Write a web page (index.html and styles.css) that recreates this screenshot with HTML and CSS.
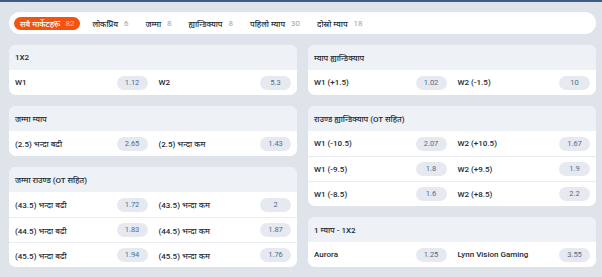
FILE: index.html
```html
<!DOCTYPE html>
<html lang="ne">
<head>
  <meta charset="UTF-8">
  <title>बजारहरू</title>
  <link rel="stylesheet" href="styles.css">
</head>
<body>

<div class="tabs">
  <span class="tab active">सबै मार्केटहरू <span class="count">82</span></span>
  <span class="tab">लोकप्रिय <span class="count">6</span></span>
  <span class="tab">जम्मा <span class="count">8</span></span>
  <span class="tab">ह्यान्डिक्याप <span class="count">8</span></span>
  <span class="tab">पहिलो म्याप <span class="count">30</span></span>
  <span class="tab">दोस्रो म्याप <span class="count">18</span></span>
</div>

<div class="markets">
  <div class="column">
    <div class="market">
      <div class="market-head">1X2</div>
      <div class="row">
        <div class="bet"><span class="name">W1</span><span class="odd">1.12</span></div>
        <div class="bet"><span class="name">W2</span><span class="odd">5.3</span></div>
      </div>
    </div>
    <div class="market">
      <div class="market-head">जम्मा म्याप</div>
      <div class="row">
        <div class="bet"><span class="name">(2.5) भन्दा बढी</span><span class="odd">2.65</span></div>
        <div class="bet"><span class="name">(2.5) भन्दा कम</span><span class="odd">1.43</span></div>
      </div>
    </div>
    <div class="market">
      <div class="market-head">जम्मा राउण्ड (OT सहित)</div>
      <div class="row">
        <div class="bet"><span class="name">(43.5) भन्दा बढी</span><span class="odd">1.72</span></div>
        <div class="bet"><span class="name">(43.5) भन्दा कम</span><span class="odd">2</span></div>
      </div>
      <div class="row">
        <div class="bet"><span class="name">(44.5) भन्दा बढी</span><span class="odd">1.83</span></div>
        <div class="bet"><span class="name">(44.5) भन्दा कम</span><span class="odd">1.87</span></div>
      </div>
      <div class="row">
        <div class="bet"><span class="name">(45.5) भन्दा बढी</span><span class="odd">1.94</span></div>
        <div class="bet"><span class="name">(45.5) भन्दा कम</span><span class="odd">1.76</span></div>
      </div>
    </div>
  </div>

  <div class="column">
    <div class="market">
      <div class="market-head">म्याप ह्यान्डिक्याप</div>
      <div class="row">
        <div class="bet"><span class="name">W1 (+1.5)</span><span class="odd">1.02</span></div>
        <div class="bet"><span class="name">W2 (-1.5)</span><span class="odd">10</span></div>
      </div>
    </div>
    <div class="market">
      <div class="market-head">राउण्ड ह्यान्डिक्याप (OT सहित)</div>
      <div class="row">
        <div class="bet"><span class="name">W1 (-10.5)</span><span class="odd">2.07</span></div>
        <div class="bet"><span class="name">W2 (+10.5)</span><span class="odd">1.67</span></div>
      </div>
      <div class="row">
        <div class="bet"><span class="name">W1 (-9.5)</span><span class="odd">1.8</span></div>
        <div class="bet"><span class="name">W2 (+9.5)</span><span class="odd">1.9</span></div>
      </div>
      <div class="row">
        <div class="bet"><span class="name">W1 (-8.5)</span><span class="odd">1.6</span></div>
        <div class="bet"><span class="name">W2 (+8.5)</span><span class="odd">2.2</span></div>
      </div>
    </div>
    <div class="market">
      <div class="market-head">1 म्याप - 1X2</div>
      <div class="row">
        <div class="bet"><span class="name">Aurora</span><span class="odd">1.25</span></div>
        <div class="bet"><span class="name">Lynn Vision Gaming</span><span class="odd">3.55</span></div>
      </div>
    </div>
  </div>
</div>

</body>
</html>
```

FILE: styles.css
```css
body {
  margin: 0;
  background: #dfe4ea;
  border-top: 2px solid #3d5b86;
  padding: 10px 6px 0 9px;
  font-family: Roboto, "Noto Sans", "Noto Sans Devanagari", sans-serif;
  font-size: 9px;
  color: #222a35;
}
.tabs {
  display: flex;
  align-items: center;
  gap: 7px;
  height: 22px;
  background: #fff;
  border-radius: 11px;
  padding: 0 5px;
}
.tab {
  display: flex;
  align-items: center;
  gap: 6px;
  height: 13px;
  padding: 0 5px;
  border-radius: 7px;
  font-size: 8px;
  font-weight: 500;
  color: #222a35;
  white-space: nowrap;
}
.tab .count { color: #9aa3ad; font-weight: 400; }
.tab.active {
  background: #f2530f;
  color: #fff;
  padding: 0 6px;
  gap: 5px;
}
.tab.active .count { color: #ffc2a6; }

.markets {
  display: grid;
  grid-template-columns: 1fr 1fr;
  gap: 11px;
  margin-top: 11px;
}
.column {
  display: flex;
  flex-direction: column;
  gap: 11px;
}
.market {
  background: #fff;
  border-radius: 7px;
  overflow: hidden;
}
.market-head {
  height: 25px;
  display: flex;
  align-items: center;
  padding: 0 6px;
  background: #eef1f5;
  font-size: 8px;
  font-weight: 500;
}
.row {
  display: grid;
  grid-template-columns: 1fr 1fr;
  gap: 11px;
  height: 24px;
  padding: 0 6px;
  border-top: 1px solid #e9ecf0;
}
.market-head + .row { border-top: none; height: 25px; }
.bet {
  display: flex;
  align-items: center;
  justify-content: space-between;
}
.name { font-size: 8px; font-weight: 500; }
.odd {
  width: 31px;
  height: 14px;
  line-height: 14px;
  text-align: center;
  border-radius: 7px;
  background: #e6eaf0;
  color: #4f6a8c;
  font-size: 7.5px;
}
```
